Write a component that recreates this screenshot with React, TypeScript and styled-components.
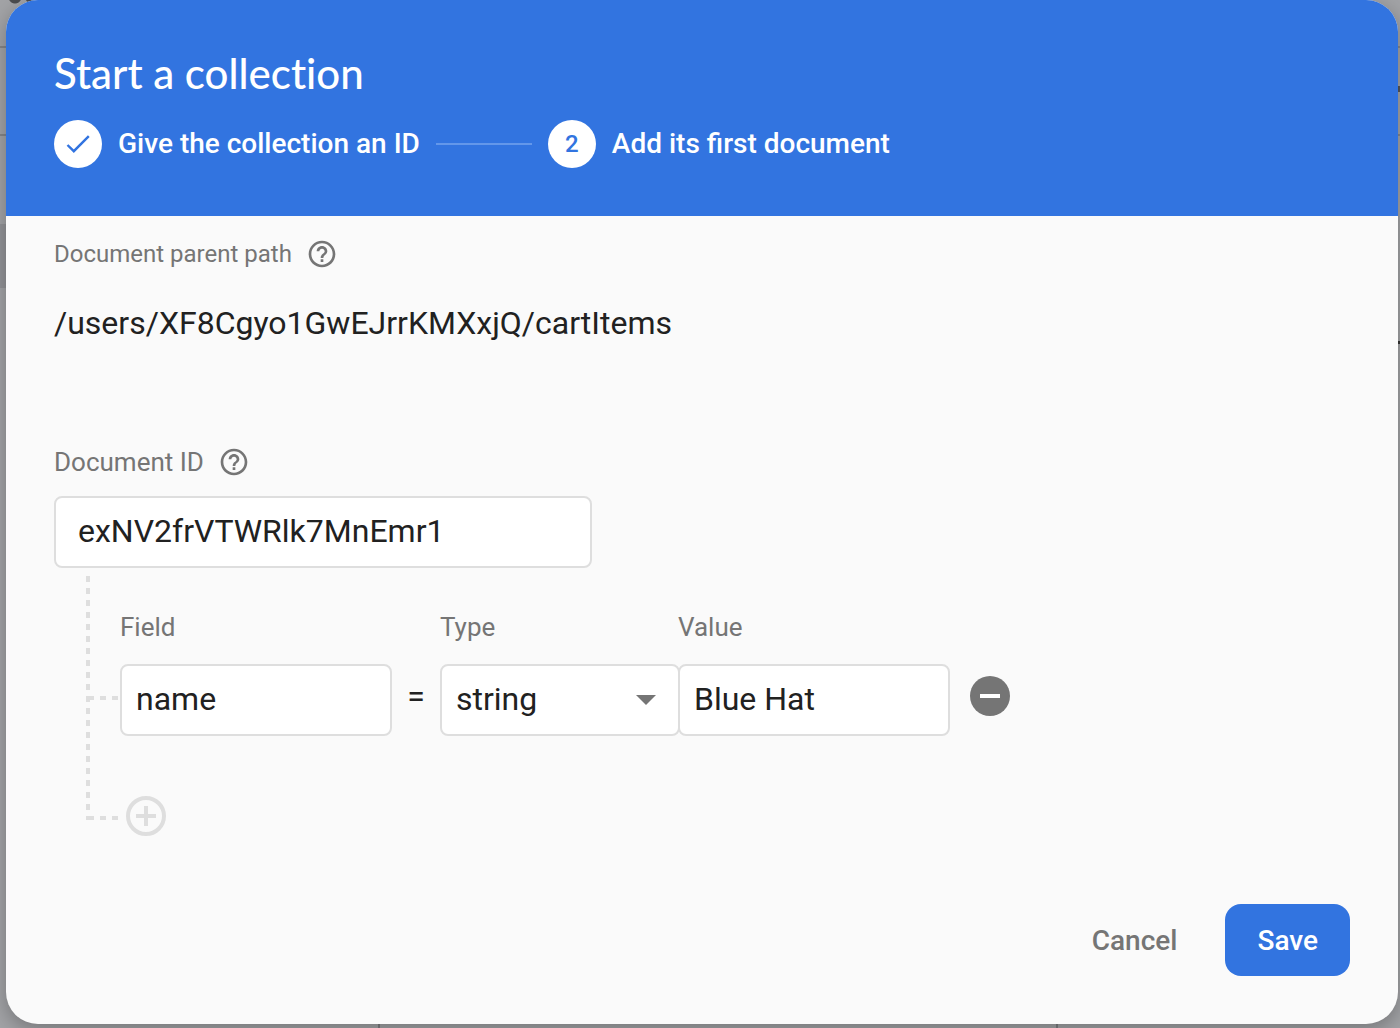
import React, { useId, useState } from "react";
import styled, { createGlobalStyle } from "styled-components";

const blue = "#3274e0";
const ink = "#212121";
const muted = "#757575";
const line = "#dedede";
const surface = "#fafafa";

const GlobalStyle = createGlobalStyle`
  *, *::before, *::after { box-sizing: border-box; }
  body {
    margin: 0;
    background: #98999c;
    font-family: Roboto, "Liberation Sans", sans-serif;
    color: ${ink};
  }
  button, input, select { font: inherit; color: inherit; margin: 0; }
`;

const Backdrop = styled.div`
  min-height: 100vh;
  padding: 0 2px 4px 6px;
  background:
    radial-gradient(circle at 15px -3px, #4c4d4f 6px, transparent 7px),
    radial-gradient(circle at 30px -2px, #4c4d4f 4px, transparent 5px),
    linear-gradient(#7c7d80, #7c7d80) 378px 100% / 2px 8px no-repeat,
    linear-gradient(#7c7d80, #7c7d80) 1056px 100% / 2px 8px no-repeat,
    linear-gradient(#333, #333) 100% 341px / 2px 3px no-repeat,
    linear-gradient(#555, #555) 100% 86px / 2px 6px no-repeat,
    linear-gradient(#858688, #858688) 0 46px / 100% 2px no-repeat,
    linear-gradient(#858688, #858688) 0 134px / 100% 2px no-repeat,
    linear-gradient(#929397, #929397) 0 224px / 50% 64px no-repeat,
    #a2a3a6;
`;

const Dialog = styled.form`
  display: flex;
  flex-direction: column;
  border-radius: 32px;
  overflow: hidden;
  background: ${surface};
  box-shadow: 0 6px 20px rgba(0, 0, 0, 0.28);
`;

const Header = styled.header`
  padding: 48px;
  background: ${blue};
  color: #fff;
`;

const Title = styled.h1`
  margin: 0 0 22px;
  font: 500 42px/50px Lato, "Open Sans", sans-serif;
  font-variant-ligatures: none;
`;

const Stepper = styled.ol`
  display: flex;
  align-items: center;
  gap: 16px;
  margin: 0;
  padding: 0;
  list-style: none;
`;

const Step = styled.li`
  display: flex;
  align-items: center;
  gap: 16px;
  font-size: 28px;
  line-height: 48px;
  font-weight: 500;
`;

const StepBadge = styled.span`
  display: grid;
  place-items: center;
  width: 48px;
  height: 48px;
  border-radius: 50%;
  background: #fff;
  color: ${blue};
  font-size: 24px;
`;

const StepLine = styled.li`
  width: 96px;
  height: 2px;
  background: #6397ea;
`;

const Content = styled.div`
  padding: 22px 48px 0;
`;

const LabelRow = styled.div<{ $size: number }>`
  display: flex;
  align-items: center;
  gap: 14px;
  height: 32px;
  font-size: ${(p) => p.$size}px;
  line-height: 32px;
  color: ${muted};
`;

const HelpButton = styled.button`
  display: flex;
  padding: 0;
  border: 0;
  background: none;
  cursor: pointer;
`;

const ParentPath = styled.p`
  margin: 32px 0 102px;
  font-size: 32px;
  line-height: 42px;
`;

const TextInput = styled.input<{ $wide?: boolean }>`
  display: block;
  width: ${(p) => (p.$wide ? 538 : 272)}px;
  height: 72px;
  padding: 0 ${(p) => (p.$wide ? 22 : 14)}px 2px;
  border: 2px solid ${line};
  border-radius: 8px;
  background: #fff;
  font-size: 32px;
`;

const IdInput = styled(TextInput)`
  margin-top: 18px;
`;

const Tree = styled.div`
  display: grid;
  grid-template-columns: 4px 30px auto;
  grid-template-rows: 84px 76px auto;
  justify-content: start;
  align-items: center;
  margin: 8px 0 0 32px;
`;

const Rail = styled.div`
  grid-column: 1;
  grid-row: 1 / 4;
  align-self: stretch;
  margin-bottom: 16px;
  background: repeating-linear-gradient(to bottom, ${line} 0 6px, transparent 6px 12px);
`;

const Branch = styled.div<{ $row: number }>`
  grid-column: 1 / 3;
  grid-row: ${(p) => p.$row};
  width: 32px;
  height: 4px;
  background: repeating-linear-gradient(to right, ${line} 0 6px, transparent 6px 12px) 2px 0;
`;

const FieldRow = styled.div`
  grid-column: 3;
  grid-row: 1 / 3;
  align-self: end;
  display: flex;
  align-items: flex-end;
`;

const FieldGroup = styled.div`
  display: flex;
  flex-direction: column;
  gap: 21px;
`;

const FieldLabel = styled.label`
  font-size: 26px;
  line-height: 32px;
  color: ${muted};
`;

const Equals = styled.span`
  width: 48px;
  font-size: 32px;
  line-height: 80px;
  text-align: center;
`;

const SelectBox = styled.div`
  display: grid;
  align-items: center;
  width: 240px;
  margin-right: -2px;
`;

const TypeSelect = styled.select`
  grid-area: 1 / 1;
  width: 100%;
  height: 72px;
  padding: 0 14px 2px;
  border: 2px solid ${line};
  border-radius: 8px;
  background: #fff;
  appearance: none;
  font-size: 32px;
`;

const Caret = styled.svg`
  grid-area: 1 / 1;
  justify-self: end;
  margin-right: 24px;
  pointer-events: none;
`;

const IconButton = styled.button`
  display: flex;
  align-items: center;
  width: 40px;
  padding: 0;
  border: 0;
  background: none;
  cursor: pointer;
`;

const RemoveButton = styled(IconButton)`
  height: 80px;
  margin-left: 20px;
`;

const AddButton = styled(IconButton)`
  grid-column: 3;
  grid-row: 3;
  margin: 60px 0 0 6px;
`;

const AddBranch = styled(Branch)`
  align-self: end;
  margin-bottom: 16px;
`;

const Actions = styled.footer`
  display: flex;
  justify-content: flex-end;
  gap: 16px;
  padding: 68px 48px 48px;
`;

const ActionButton = styled.button<{ $primary?: boolean }>`
  height: 72px;
  padding: 0 32px;
  border: 0;
  border-radius: 16px;
  background: ${(p) => (p.$primary ? blue : "transparent")};
  color: ${(p) => (p.$primary ? "#fff" : muted)};
  font-size: 28px;
  font-weight: 500;
  cursor: pointer;
`;

function Help({ topic }: { topic: string }) {
  return (
    <HelpButton type="button" aria-label={`Help: ${topic}`}>
      <svg width="32" height="32" viewBox="0 0 24 24" fill={muted}>
        <path d="M11 18h2v-2h-2v2zm1-16C6.480 2 2 6.480 2 12s4.480 10 10 10 10-4.480 10-10S17.520 2 12 2zm0 18c-4.410 0-8-3.590-8-8s3.590-8 8-8 8 3.590 8 8-3.590 8-8 8zm0-14c-2.210 0-4 1.790-4 4h2c0-1.100.900-2 2-2s2 .900 2 2c0 2-3 1.750-3 5h2c0-2.250 3-2.500 3-5 0-2.210-1.790-4-4-4z" />
      </svg>
    </HelpButton>
  );
}

export default function App() {
  const id = useId();
  const [docId, setDocId] = useState("exNV2frVTWRlk7MnEmr1");
  const [field, setField] = useState("name");
  const [value, setValue] = useState("Blue Hat");

  return (
    <>
      <GlobalStyle />
      <Backdrop>
        <Dialog onSubmit={(e) => e.preventDefault()}>
          <Header>
            <Title>Start a collection</Title>
            <Stepper>
              <Step>
                <StepBadge>
                  <svg width="32" height="32" viewBox="0 0 32 32" fill="none" stroke={blue} strokeWidth="2.400">
                    <path d="M5.500 17L11.800 23.200L26.800 8.200" />
                  </svg>
                </StepBadge>
                Give the collection an ID
              </Step>
              <StepLine aria-hidden="true" />
              <Step aria-current="step">
                <StepBadge>2</StepBadge>
                Add its first document
              </Step>
            </Stepper>
          </Header>

          <Content>
            <LabelRow $size={24}>
              <span>Document parent path</span>
              <Help topic="Document parent path" />
            </LabelRow>
            <ParentPath>/users/XF8Cgyo1GwEJrrKMXxjQ/cartItems</ParentPath>

            <LabelRow $size={26}>
              <label htmlFor={`${id}-doc`}>Document ID</label>
              <Help topic="Document ID" />
            </LabelRow>
            <IdInput $wide id={`${id}-doc`} value={docId} onChange={(e) => setDocId(e.target.value)} />

            <Tree>
              <Rail />
              <Branch $row={2} />
              <FieldRow>
                <FieldGroup>
                  <FieldLabel htmlFor={`${id}-field`}>Field</FieldLabel>
                  <TextInput id={`${id}-field`} value={field} onChange={(e) => setField(e.target.value)} />
                </FieldGroup>
                <Equals>=</Equals>
                <FieldGroup>
                  <FieldLabel htmlFor={`${id}-type`}>Type</FieldLabel>
                  <SelectBox>
                    <TypeSelect id={`${id}-type`} defaultValue="string">
                      <option>string</option>
                      <option>number</option>
                      <option>boolean</option>
                    </TypeSelect>
                    <Caret width="20" height="10" viewBox="0 0 20 10" fill={muted}>
                      <path d="M0 0h20L10 10z" />
                    </Caret>
                  </SelectBox>
                </FieldGroup>
                <FieldGroup>
                  <FieldLabel htmlFor={`${id}-value`}>Value</FieldLabel>
                  <TextInput id={`${id}-value`} value={value} onChange={(e) => setValue(e.target.value)} />
                </FieldGroup>
                <RemoveButton type="button" aria-label="Remove field">
                  <svg width="40" height="40" viewBox="0 0 40 40">
                    <circle cx="20" cy="20" r="20" fill={muted} />
                    <path d="M10 18h20v4H10z" fill="#fff" />
                  </svg>
                </RemoveButton>
              </FieldRow>
              <AddBranch $row={3} />
              <AddButton type="button" aria-label="Add field">
                <svg width="40" height="40" viewBox="0 0 40 40" fill="none" stroke={line} strokeWidth="4">
                  <circle cx="20" cy="20" r="18" />
                  <path d="M20 10v20M10 20h20" />
                </svg>
              </AddButton>
            </Tree>
          </Content>

          <Actions>
            <ActionButton type="button">Cancel</ActionButton>
            <ActionButton type="submit" $primary>Save</ActionButton>
          </Actions>
        </Dialog>
      </Backdrop>
    </>
  );
}
